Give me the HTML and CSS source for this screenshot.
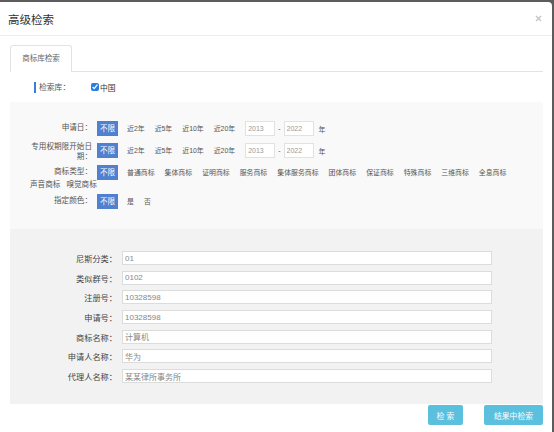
FILE: index.html
```html
<!DOCTYPE html>
<html lang="zh-CN">
<head>
    <meta charset="UTF-8">
    <title>高级检索</title>
    <link rel="stylesheet" href="styles.css">
</head>
<body>
    <div class="modal">
        <div class="modal-header">
            <span class="modal-title">高级检索</span>
            <svg class="close" width="7" height="7" viewBox="0 0 7 7">
                <path d="M1 1 L6 6 M6 1 L1 6" stroke="#c4c4c4" stroke-width="1.4"/>
            </svg>
        </div>
        <div class="modal-body">
            <div class="tabs">
                <div class="tab active">商标库检索</div>
            </div>

            <div class="db-row">
                <span class="db-label">检索库：</span>
                <label class="db-check"><input type="checkbox" checked>中国</label>
            </div>

            <div class="filters">
                <div class="filter-row">
                    <span class="filter-label">申请日：</span>
                    <span class="opt-btn">不限</span>
                    <span class="opt">近2年</span>
                    <span class="opt">近5年</span>
                    <span class="opt">近10年</span>
                    <span class="opt">近20年</span>
                    <input class="year-input" type="text" value="2013">
                    <span class="dash">-</span>
                    <input class="year-input" type="text" value="2022">
                    <span class="year-unit">年</span>
                </div>
                <div class="filter-row">
                    <span class="filter-label">专用权期限开始日期：</span>
                    <span class="opt-btn">不限</span>
                    <span class="opt">近2年</span>
                    <span class="opt">近5年</span>
                    <span class="opt">近10年</span>
                    <span class="opt">近20年</span>
                    <input class="year-input" type="text" value="2013">
                    <span class="dash">-</span>
                    <input class="year-input" type="text" value="2022">
                    <span class="year-unit">年</span>
                </div>
                <div class="filter-row">
                    <span class="filter-label">商标类型：</span>
                    <span class="opt-btn">不限</span>
                    <span class="opt">普通商标</span>
                    <span class="opt">集体商标</span>
                    <span class="opt">证明商标</span>
                    <span class="opt">服务商标</span>
                    <span class="opt">集体服务商标</span>
                    <span class="opt">团体商标</span>
                    <span class="opt">保证商标</span>
                    <span class="opt">特殊商标</span>
                    <span class="opt">三维商标</span>
                    <span class="opt">全息商标</span>
                    <span class="opt wrap-first">声音商标</span>
                    <span class="opt wrap-next">嗅觉商标</span>
                </div>
                <div class="filter-row">
                    <span class="filter-label">指定颜色：</span>
                    <span class="opt-btn">不限</span>
                    <span class="opt">是</span>
                    <span class="opt">否</span>
                </div>
            </div>

            <div class="fields">
                <div class="field-row">
                    <label class="field-label">尼斯分类：</label>
                    <input class="field-input" type="text" value="01">
                </div>
                <div class="field-row">
                    <label class="field-label">类似群号：</label>
                    <input class="field-input" type="text" value="0102">
                </div>
                <div class="field-row">
                    <label class="field-label">注册号：</label>
                    <input class="field-input" type="text" value="10328598">
                </div>
                <div class="field-row">
                    <label class="field-label">申请号：</label>
                    <input class="field-input" type="text" value="10328598">
                </div>
                <div class="field-row">
                    <label class="field-label">商标名称：</label>
                    <input class="field-input" type="text" value="计算机">
                </div>
                <div class="field-row">
                    <label class="field-label">申请人名称：</label>
                    <input class="field-input" type="text" value="华为">
                </div>
                <div class="field-row">
                    <label class="field-label">代理人名称：</label>
                    <input class="field-input" type="text" value="某某律所事务所">
                </div>
            </div>

            <div class="actions">
                <button class="btn-info">检 索</button>
                <button class="btn-info">结果中检索</button>
            </div>
        </div>
    </div>
</body>
</html>
```

FILE: styles.css
```css
body {
    margin: 0;
    background-color: #5c5c5c;
    font-family: "Liberation Sans", "Noto Sans CJK SC", sans-serif;
    color: #333;
    overflow: hidden;
}

.modal {
    margin-top: 2px;
    width: 552px;
    height: 440px;
    background-color: #fff;
    border-top-right-radius: 4px;
}

.modal-header {
    display: flex;
    align-items: center;
    justify-content: space-between;
    height: 33px;
    padding: 0 10px 0 8px;
    border-bottom: 1px solid #eee;
}

.modal-title {
    font-size: 11.5px;
    color: #333;
}

.close {
    margin-top: -1px;
}

.modal-body {
    padding: 9px 9px 0 10px;
}

/* tabs */
.tabs {
    display: flex;
    height: 26px;
    border-bottom: 1px solid #e3e3e3;
}

.tab {
    width: 62px;
    box-sizing: border-box;
    height: 27px;
    line-height: 26px;
    text-align: center;
    font-size: 7.5px;
    color: #666;
    background-color: #fff;
    border: 1px solid #e3e3e3;
    border-bottom: none;
    border-radius: 3px 3px 0 0;
}

/* database row */
.db-row {
    display: flex;
    align-items: center;
    height: 14px;
    padding: 8px 0 8px 24px;
    font-size: 7.8px;
}

.db-label {
    width: 52px;
    padding-left: 3px;
    border-left: 2px solid #3b7dd8;
    line-height: 11px;
    color: #555;
}

.db-check {
    display: flex;
    align-items: center;
    color: #333;
}

.db-check input {
    width: 8px;
    height: 8px;
    margin: 0 1px 0 0;
    accent-color: #2a7be4;
}

/* filter options */
.filters {
    background-color: #f9f9f9;
    padding: 19px 0 20px 20px;
}

.filter-row {
    display: flex;
    flex-wrap: wrap;
    align-items: center;
    margin-bottom: 4px;
}

.filter-row:last-child {
    margin-bottom: 0;
}

.filter-label {
    width: 62px;
    text-align: right;
    font-size: 7.6px;
    line-height: 9.5px;
    color: #555;
    align-self: flex-start;
    padding-top: 2px;
}

.opt-btn {
    margin-left: 5px;
    margin-right: 4px;
    height: 15px;
    line-height: 15px;
    padding: 0 3px;
    font-size: 7.5px;
    color: #fff;
    background-color: #4f81d0;
}

.opt {
    padding: 0 5px;
    font-size: 6.9px;
    line-height: 10px;
    color: #555;
}

.wrap-first {
    padding-left: 0;
    padding-right: 3px;
    font-size: 7.6px;
}

.wrap-next {
    padding-left: 3px;
    font-size: 7.6px;
}

.year-input {
    width: 30px;
    height: 15px;
    box-sizing: border-box;
    margin-left: 5px;
    padding: 0 2px;
    border: 1px solid #e2e2e2;
    font-family: inherit;
    font-size: 7px;
    color: #999;
    background-color: #fff;
    outline: none;
}

.dash {
    margin: 0 3px;
    font-size: 7px;
    color: #555;
}

.dash + .year-input {
    margin-left: 0;
}

.year-unit {
    margin-left: 5px;
    font-size: 7px;
    color: #555;
}

/* field inputs */
.fields {
    background-color: #f2f2f2;
    padding: 22px 0 21px 0;
}

.field-row {
    display: flex;
    align-items: center;
    margin-bottom: 5.7px;
}

.field-row:last-child {
    margin-bottom: 0;
}

.field-label {
    width: 107px;
    text-align: right;
    font-size: 8.2px;
    color: #444;
}

.field-input {
    width: 370px;
    height: 14px;
    box-sizing: border-box;
    margin-left: 5px;
    padding: 0 2px;
    border: 1px solid #dcdcdc;
    font-family: inherit;
    font-size: 8px;
    color: #888;
    background-color: #fff;
    outline: none;
}

/* footer buttons */
.actions {
    display: flex;
    justify-content: flex-end;
    gap: 21px;
    padding-top: 1px;
}

.btn-info {
    height: 20px;
    padding: 0 7px;
    border: none;
    border-radius: 2px;
    background-color: #5bc0de;
    color: #fff;
    font-family: inherit;
    font-size: 7.8px;
}

.btn-info:first-child {
    width: 35px;
}

.btn-info:last-child {
    width: 59px;
}
```
